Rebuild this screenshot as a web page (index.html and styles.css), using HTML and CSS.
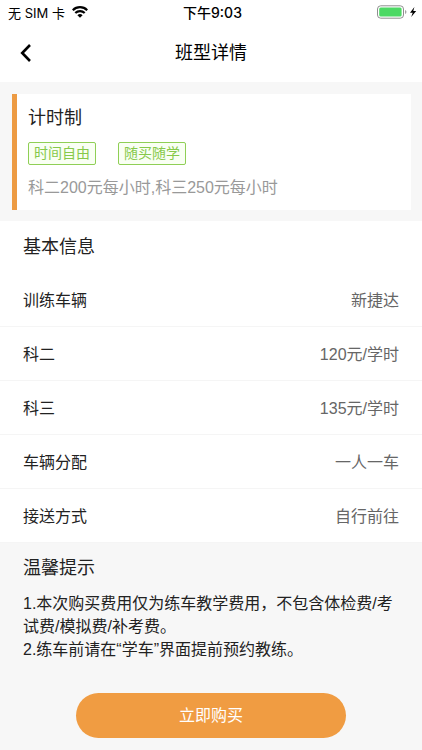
FILE: index.html
```html
<!DOCTYPE html>
<html lang="zh-CN">
  <head>
    <meta charset="UTF-8" />
    <meta name="viewport" content="width=device-width, initial-scale=1.0" />
    <title>班型详情</title>
    <link rel="stylesheet" href="styles.css">
  </head>
  <body>
    <div class="status-bar">
      <div class="carrier">
        <span>无 SIM 卡</span>
        <svg width="16" height="12" viewBox="0 0 16 12" fill="none" stroke="#000" stroke-width="2.2">
          <path d="M0.8 4.2a10.2 10.2 0 0 1 14.4 0" />
          <path d="M3.3 7a6.6 6.6 0 0 1 9.4 0" />
          <path d="M8 11.8 5.4 9.2a3.7 3.7 0 0 1 5.2 0z" fill="#000" stroke="none" />
        </svg>
      </div>
      <div class="time">下午9:03</div>
      <div class="battery">
        <svg width="40" height="14" viewBox="0 0 40 14">
          <rect x="0.5" y="0.8" width="26" height="12.4" rx="3.2" fill="#fff" stroke="#8f8f8f" />
          <rect x="2.2" y="2.6" width="22.4" height="8.8" rx="1.5" fill="#4cd964" />
          <path d="M28.2 5v4c1.6-.6 1.6-3.4 0-4z" fill="#8f8f8f" />
          <path d="M37.4 2 33 7.7h2.7L34.2 12l5-6h-2.9z" fill="#000" />
        </svg>
      </div>
    </div>

    <header class="nav">
      <button class="back-btn" aria-label="返回">
        <svg width="12" height="18" viewBox="0 0 12 18" fill="none" stroke="#000" stroke-width="2.6">
          <path d="M10 1 2.2 9l7.8 8" />
        </svg>
      </button>
      <h1>班型详情</h1>
    </header>

    <main>
      <section class="summary">
        <div class="card">
          <h2>计时制</h2>
          <div class="tags">
            <span class="tag">时间自由</span>
            <span class="tag">随买随学</span>
          </div>
          <p>科二200元每小时,科三250元每小时</p>
        </div>
      </section>

      <section class="info">
        <h2>基本信息</h2>
        <dl>
          <div class="row"><dt>训练车辆</dt><dd>新捷达</dd></div>
          <div class="row"><dt>科二</dt><dd>120元/学时</dd></div>
          <div class="row"><dt>科三</dt><dd>135元/学时</dd></div>
          <div class="row"><dt>车辆分配</dt><dd>一人一车</dd></div>
          <div class="row"><dt>接送方式</dt><dd>自行前往</dd></div>
        </dl>
      </section>

      <section class="tips">
        <h2>温馨提示</h2>
        <p>1.本次购买费用仅为练车教学费用，不包含体检费/考试费/模拟费/补考费。</p>
        <p>2.练车前请在“学车”界面提前预约教练。</p>
      </section>

      <div class="footer">
        <button class="buy-btn">立即购买</button>
      </div>
    </main>
  </body>
</html>
```
FILE: styles.css
```css
* {
  box-sizing: border-box;
  margin: 0;
  padding: 0;
}

body {
  min-height: 100vh;
  background-color: #f7f7f7;
  color: #222;
  font-family: "Liberation Sans", "Noto Sans CJK SC", sans-serif;
  font-size: 16px;
}

h1,
h2 {
  font-size: 18px;
  font-weight: 400;
  line-height: 26px;
}

/* status bar */
.status-bar {
  display: grid;
  grid-template-columns: 1fr auto 1fr;
  align-items: center;
  height: 24px;
  padding: 0 5px 0 8px;
  background-color: #fff;
  color: #000;
  font-family: Inter, "Noto Sans CJK SC", sans-serif;
  font-size: 13px;
}

.carrier {
  display: flex;
  align-items: center;
  gap: 7px;
}

.time {
  font-weight: 500;
  font-size: 14px;
}

.battery {
  display: flex;
  justify-content: flex-end;
}

/* title bar */
.nav {
  display: grid;
  grid-template-columns: 1fr auto 1fr;
  align-items: center;
  height: 58px;
  padding: 0 20px;
  background-color: #fff;
  color: #000;
}

.back-btn {
  display: flex;
  justify-self: start;
  background: none;
  border: none;
  cursor: pointer;
}

/* course card */
.summary {
  padding: 12px 11px 11px 12px;
}

.card {
  padding: 11px;
  background-color: #fff;
  border-left: 5px solid #ed9b43;
}

.tags {
  display: flex;
  gap: 22px;
  margin: 11px 0;
}

.tag {
  padding: 0 5px;
  border: 1px solid #8fcf55;
  border-radius: 2px;
  background-color: #f9fff3;
  color: #86c94a;
  font-size: 14px;
  line-height: 21px;
}

.card p {
  color: #999;
  line-height: 23px;
}

/* info list */
.info {
  background-color: #fff;
}

.info h2 {
  padding: 13px 23px;
}

.row {
  display: flex;
  align-items: center;
  justify-content: space-between;
  height: 54px;
  padding: 0 23px 2px;
  border-bottom: 1px solid #f5f5f5;
}

.row dd {
  color: #666;
}

/* tips */
.tips {
  padding: 12px 23px;
}

.tips h2 {
  margin-bottom: 11px;
}

.tips p {
  line-height: 23px;
}

.footer {
  padding: 20px 76px 12px;
}

.buy-btn {
  display: block;
  width: 100%;
  height: 45px;
  padding-bottom: 4px;
  border: none;
  border-radius: 23px;
  background-color: #f09c42;
  color: #fff;
  font-family: inherit;
  font-size: 16px;
  cursor: pointer;
}
```
